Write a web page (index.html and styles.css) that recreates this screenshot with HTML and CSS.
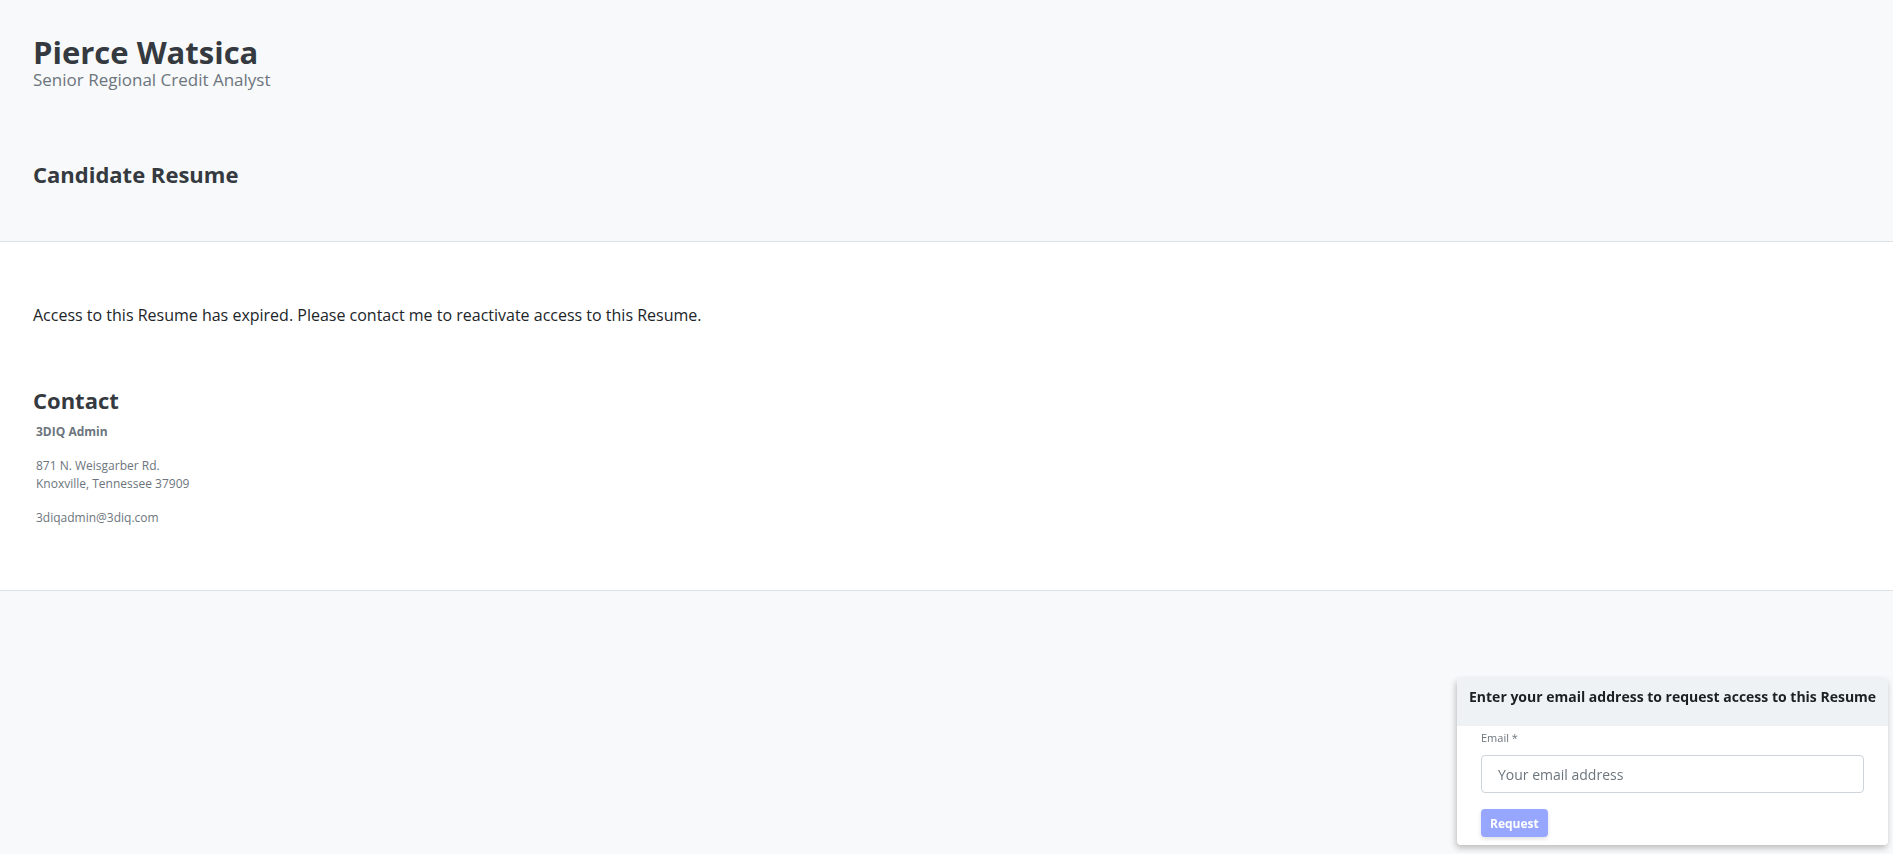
FILE: index.html
```html
<!DOCTYPE html>
<html lang="en">
<head>
    <meta charset="utf-8">
    <meta name="viewport" content="width=device-width, initial-scale=1.0">
    <title>Pierce Watsica - Candidate Resume</title>
    <link rel="stylesheet" href="styles.css">
</head>
<body>
    <header class="page-header">
        <h1 class="candidate-name">Pierce Watsica</h1>
        <div class="candidate-title">Senior Regional Credit Analyst</div>
        <h2 class="page-title">Candidate Resume</h2>
    </header>

    <main class="page-body">
        <p class="expired-msg">Access to this Resume has expired. Please contact me to reactivate access to this Resume.</p>

        <!-- Contact -->
        <section class="contact">
            <h3 class="contact-title">Contact</h3>
            <div class="contact-name">3DIQ Admin</div>
            <div class="contact-address">
                <div>871 N. Weisgarber Rd.</div>
                <div>Knoxville, Tennessee 37909</div>
            </div>
            <div class="contact-email">3diqadmin@3diq.com</div>
        </section>
    </main>

    <!-- Request access -->
    <div class="request-card">
        <div class="request-header">Enter your email address to request access to this Resume</div>
        <div class="request-body">
            <label class="request-label" for="request_email">Email *</label>
            <input type="email" id="request_email" class="request-input" placeholder="Your email address">
            <button class="request-btn" disabled>Request</button>
        </div>
    </div>
</body>
</html>
```

FILE: styles.css
```css
* {
    margin: 0;
    box-sizing: border-box;
}

body {
    font-family: "Open Sans", sans-serif;
    background-color: #f8f9fa;
    color: #212529;
}

.page-header {
    padding: 34px 33px 54px;
    border-bottom: 1px solid #dee2e6;
}

.candidate-name {
    font-size: 31px;
    font-weight: 700;
    line-height: 36px;
    color: #343a40;
}

.candidate-title {
    font-size: 17px;
    line-height: 20px;
    color: #6c757d;
}

.page-title {
    margin-top: 71px;
    font-size: 22px;
    line-height: 26px;
    font-weight: 700;
    color: #343a40;
}

.page-body {
    background-color: #fff;
    padding: 61px 33px 63px;
    border-bottom: 1px solid #dee2e6;
}

.expired-msg {
    font-size: 16px;
    line-height: 24px;
}

.contact {
    margin-top: 60px;
}

.contact-title {
    font-size: 22px;
    line-height: 26px;
    font-weight: 700;
    color: #343a40;
}

.contact-name,
.contact-address,
.contact-email {
    padding-left: 3px;
    font-size: 12px;
    line-height: 18px;
    color: #6c757d;
}

.contact-name {
    margin-top: 10px;
    font-weight: 700;
}

.contact-address {
    margin-top: 16px;
}

.contact-email {
    margin-top: 16px;
}

/* Request access card */
.request-card {
    position: fixed;
    right: 5px;
    bottom: 9px;
    width: 431px;
    background-color: #fff;
    border-radius: 4px;
    box-shadow: -1px 3px 6px rgba(0, 0, 0, 0.25);
    overflow: hidden;
}

.request-header {
    height: 48px;
    padding: 9px 12px 0;
    background-color: #eff2f5;
    font-size: 14px;
    line-height: 20px;
    font-weight: 700;
    color: #1c1f23;
    white-space: nowrap;
}

.request-body {
    padding: 4px 24px 8px;
    display: flex;
    flex-direction: column;
    align-items: flex-start;
}

.request-label {
    font-size: 11px;
    line-height: 16px;
    color: #6c757d;
}

.request-input {
    margin-top: 9px;
    width: 100%;
    height: 38px;
    padding: 0 16px;
    border: 1px solid #ced4da;
    border-radius: 4px;
    font-family: "Open Sans", sans-serif;
    font-size: 14px;
}

.request-input::placeholder {
    color: #6c757d;
}

.request-btn {
    margin-top: 16px;
    height: 28px;
    padding: 0 9px;
    border: none;
    border-radius: 4px;
    background-color: #97a6ff;
    color: #fff;
    font-family: "Open Sans", sans-serif;
    font-size: 12px;
    font-weight: 700;
    box-shadow: 0 2px 4px rgba(0, 0, 0, 0.12);
}
```
